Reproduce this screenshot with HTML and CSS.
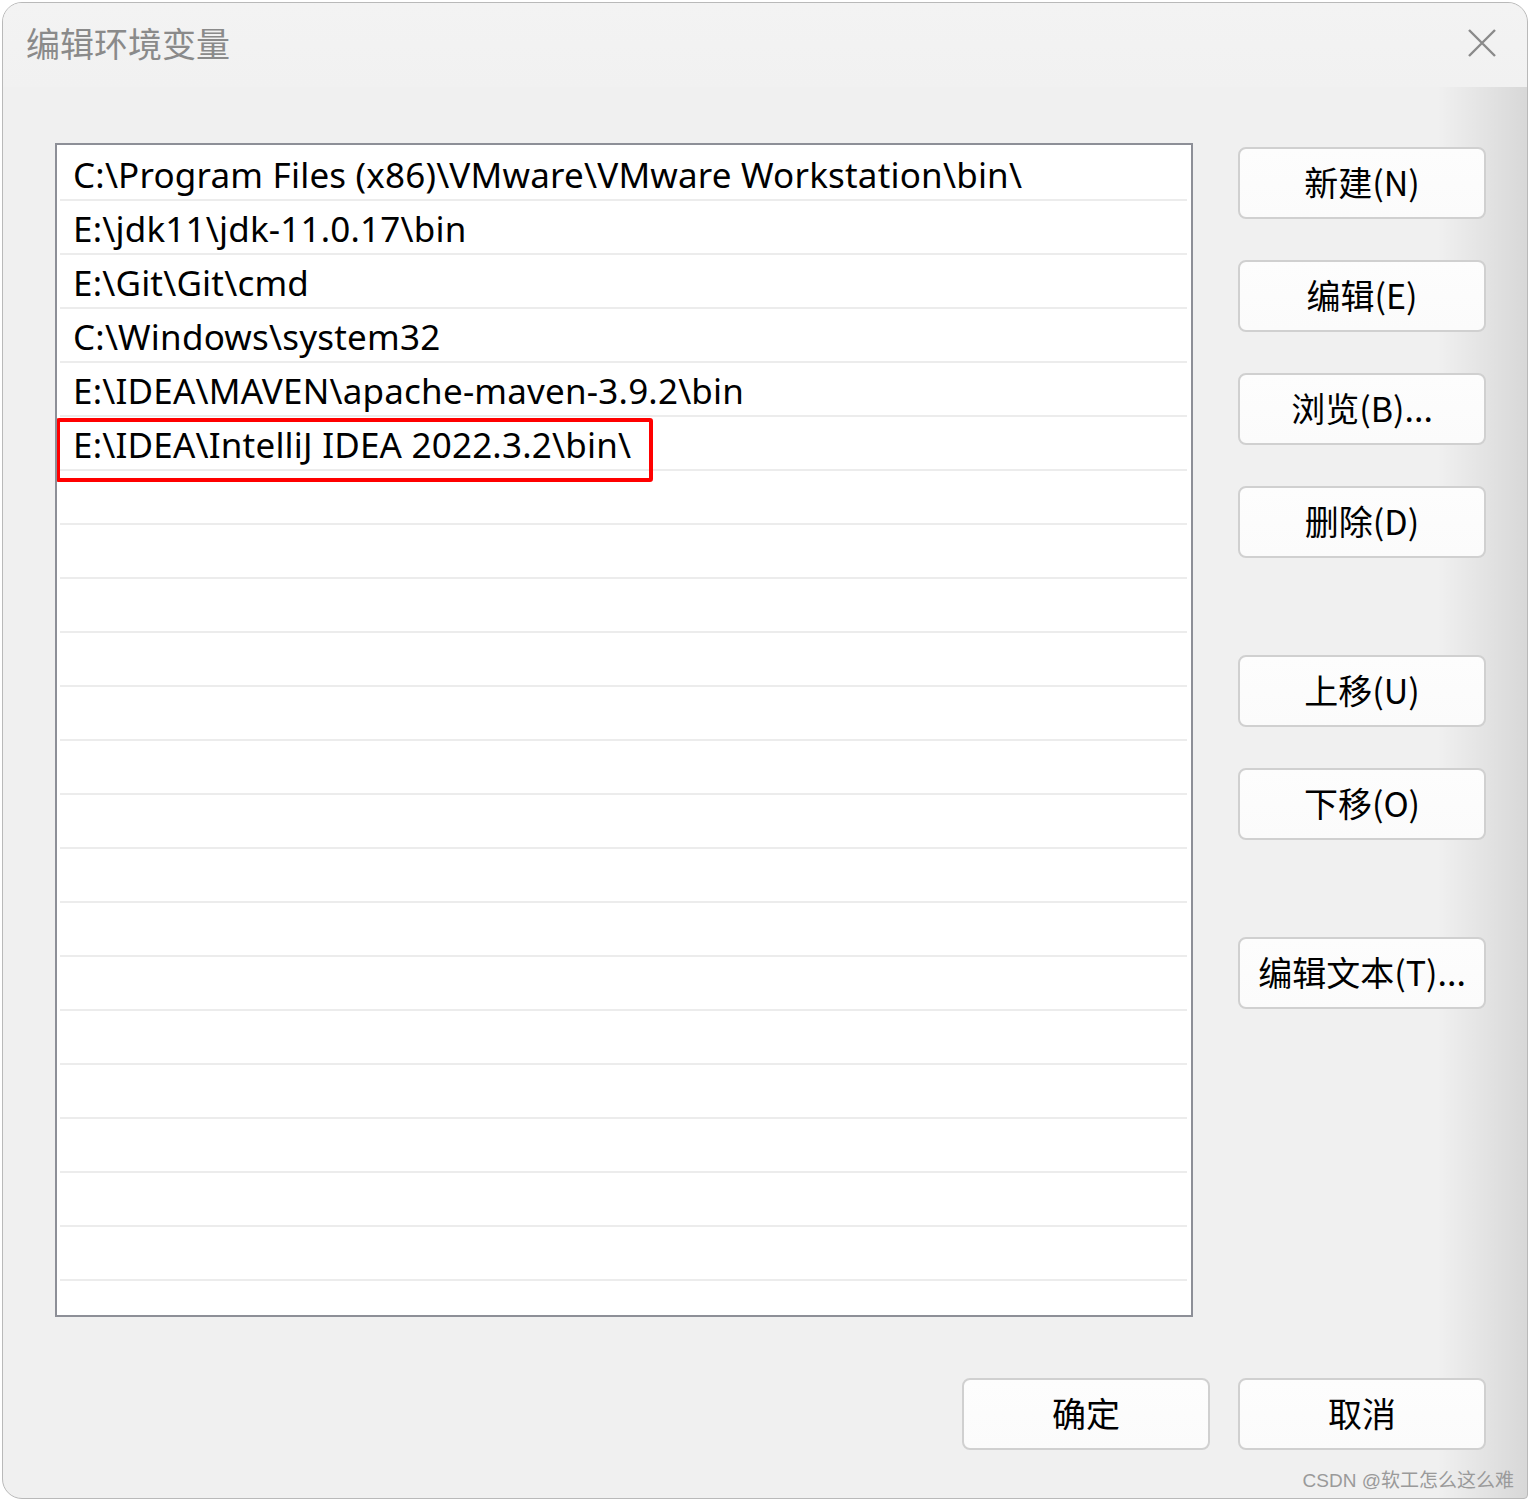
FILE: index.html
```html
<!DOCTYPE html>
<html lang="zh-CN">
<head>
<meta charset="utf-8">
<title>编辑环境变量</title>
<link rel="stylesheet" href="styles.css">
</head>
<body>
<div class="window">
  <div class="titlebar">
    <div class="title">编辑环境变量</div>
    <svg class="close" width="30" height="30" viewBox="0 0 30 30"><path d="M2 2 L28 28 M28 2 L2 28" stroke="#8a8a8a" stroke-width="2.4" fill="none"/></svg>
  </div>
  <div class="main">
    <div class="list">
      <div class="row">C:\Program Files (x86)\VMware\VMware Workstation\bin\</div>
      <div class="row">E:\jdk11\jdk-11.0.17\bin</div>
      <div class="row">E:\Git\Git\cmd</div>
      <div class="row">C:\Windows\system32</div>
      <div class="row">E:\IDEA\MAVEN\apache-maven-3.9.2\bin</div>
      <div class="row highlighted">E:\IDEA\IntelliJ IDEA 2022.3.2\bin\</div>
      <div class="row"></div><div class="row"></div><div class="row"></div><div class="row"></div>
      <div class="row"></div><div class="row"></div><div class="row"></div><div class="row"></div>
      <div class="row"></div><div class="row"></div><div class="row"></div><div class="row"></div>
      <div class="row"></div><div class="row"></div><div class="row"></div><div class="row last"></div>
    </div>
    <div class="side">
      <div class="group">
        <button class="btn">新建(N)</button>
        <button class="btn">编辑(E)</button>
        <button class="btn">浏览(B)...</button>
        <button class="btn">删除(D)</button>
      </div>
      <div class="group">
        <button class="btn">上移(U)</button>
        <button class="btn">下移(O)</button>
      </div>
      <div class="group">
        <button class="btn">编辑文本(T)...</button>
      </div>
    </div>
  </div>
  <div class="footer">
    <button class="btn">确定</button>
    <button class="btn">取消</button>
  </div>
  <div class="watermark">CSDN @软工怎么这么难</div>
</div>
</body>
</html>
```

FILE: styles.css
```css
html, body {
  margin: 0;
  padding: 0;
  background: #ffffff;
}
body {
  font-family: "Noto Sans", "Noto Sans CJK SC", sans-serif;
}
.window {
  position: relative;
  margin: 2px 0 0 2px;
  width: 1524px;
  height: 1495px;
  border: 1px solid #b9b9b9;
  border-radius: 20px 20px 4px 20px;
  overflow: hidden;
  background: linear-gradient(to right, rgba(0,0,0,0) calc(100% - 90px), rgba(0,0,0,0.10) 100%), #f0f0f0;
  display: flex;
  flex-direction: column;
}
.titlebar {
  height: 84px;
  display: flex;
  align-items: center;
  justify-content: space-between;
  padding: 0 30px 0 23px;
  background: linear-gradient(to bottom, #f3f3f3, #f1f1f1);
  flex: none;
}
.title {
  font-family: "Noto Sans CJK SC", sans-serif;
  font-size: 34px;
  color: #8a8a8a;
  margin-top: -6px;
}
.close {
  margin-top: -5px;
}
.main {
  display: flex;
  padding: 56px 0 0 52px;
  gap: 45px;
}
.list {
  width: 1127px;
  height: 1168px;
  border: 2px solid #8d8f97;
  background: #ffffff;
  padding: 2px 4px 0 3px;
  box-sizing: content-box;
  overflow: hidden;
}
.row {
  height: 52px;
  border-bottom: 2px solid #ececec;
  padding-left: 13px;
  font-family: "Noto Sans", "Noto Sans CJK SC", sans-serif;
  font-size: 35px;
  letter-spacing: 0.2px;
  line-height: 56px;
  color: #000;
  white-space: nowrap;
  position: relative;
}
.row.highlighted::after {
  content: "";
  position: absolute;
  left: -4px;
  top: 1px;
  width: 589px;
  height: 56px;
  border: 4px solid #f00;
  border-radius: 3px;
}
.side {
  display: flex;
  flex-direction: column;
  gap: 97px;
  padding-top: 4px;
}
.group {
  display: flex;
  flex-direction: column;
  gap: 41px;
}
.btn {
  width: 248px;
  height: 72px;
  border: 2px solid #d0d0d0;
  border-radius: 8px;
  background: linear-gradient(to bottom, #fdfdfd, #fbfbfb);
  font-family: "Noto Sans CJK SC", sans-serif;
  font-size: 34px;
  color: #000;
  padding: 0 0 4px 0;
  display: flex;
  align-items: center;
  justify-content: center;
  box-sizing: border-box;
}
.footer {
  display: flex;
  justify-content: flex-end;
  gap: 28px;
  padding: 61px 41px 0 0;
}
.watermark {
  position: absolute;
  right: 13px;
  bottom: 6px;
  font-family: "Liberation Sans", "Noto Sans CJK SC", sans-serif;
  font-size: 19px;
  color: #9a9a9a;
}
```
